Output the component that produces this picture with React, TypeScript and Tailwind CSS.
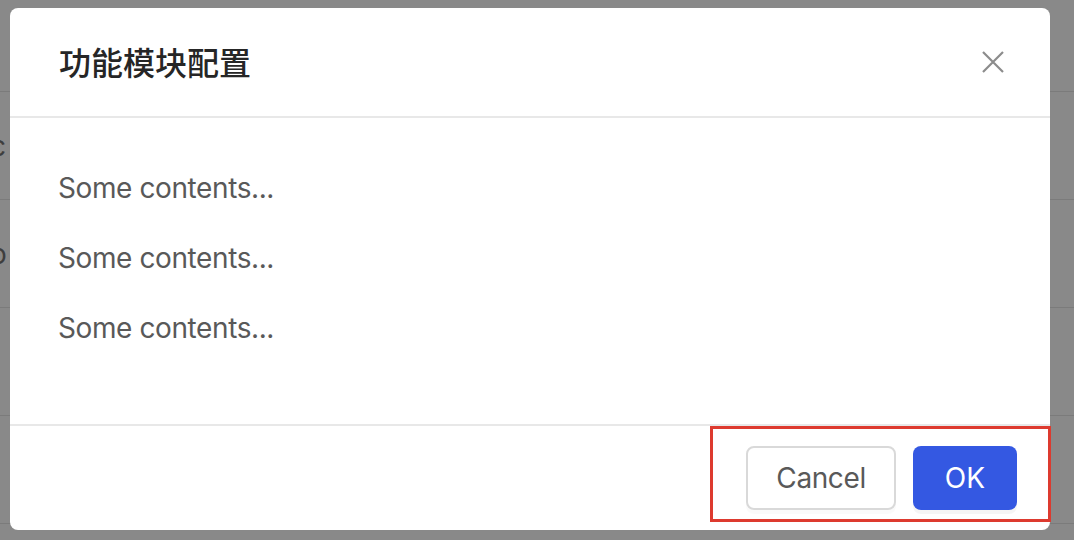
import React from "react";

const rows = [
  { h: "h-[92px]", text: "" },
  { h: "h-[108px]", text: "c" },
  { h: "h-[108px]", text: "o" },
  { h: "h-[108px]", text: "" },
  { h: "h-[108px]", text: "" },
];

// Close icon for the modal header
const CloseIcon = () => (
  <svg width="24" height="24" viewBox="0 0 24 24" fill="none">
    <path d="M2 2L22 22M22 2L2 22" stroke="#8c8c8c" strokeWidth="2.2" />
  </svg>
);

export default function App() {
  return (
    <div
      className="relative w-full h-[540px] overflow-hidden bg-[#898989]"
      style={{ fontFamily: "Inter, 'Noto Sans CJK SC', sans-serif" }}
    >
      {/* page behind the mask */}
      <div className="flex flex-col">
        {rows.map((r, i) => (
          <div
            key={i}
            className={`${r.h} border-b border-[#7b7b7b] flex items-center text-[28px] text-[#3e3e3e]`}
          >
            <span className="-ml-[10px]">{r.text}</span>
          </div>
        ))}
      </div>

      {/* modal */}
      <div className="absolute left-[10px] top-[8px] w-[1040px] h-[522px] rounded-lg bg-white flex flex-col">
        <div className="h-[110px] shrink-0 border-b-2 border-[#e8e8e8] flex items-center justify-between pl-[49px] pr-[45px]">
          <h1
            className="text-[32px] font-medium text-[#262626] -mt-[2px]"
            style={{ fontFamily: "'Noto Sans CJK SC', sans-serif" }}
          >
            功能模块配置
          </h1>
          <button className="w-[24px] h-[24px] flex items-center justify-center">
            <CloseIcon />
          </button>
        </div>

        <div className="flex-1 px-[48px] pt-[48px] text-[28px] tracking-[-0.4px] text-[#595959]">
          <p className="leading-[44px] mb-[26px]">Some contents...</p>
          <p className="leading-[44px] mb-[26px]">Some contents...</p>
          <p className="leading-[44px] mb-[26px]">Some contents...</p>
        </div>

        <div className="shrink-0 border-t-2 border-[#e8e8e8] py-[20px] px-[33px] flex justify-end gap-[17px]">
          <button className="h-[64px] px-[28px] rounded-lg border-2 border-[#d9d9d9] bg-white text-[28px] tracking-[-0.4px] text-[#595959] shadow-[0_4px_0_rgba(0,0,0,0.02)]">
            Cancel
          </button>
          <button className="h-[64px] px-[32px] rounded-lg bg-[#3458e2] text-[28px] text-white shadow-[0_4px_0_rgba(0,0,0,0.04)]">
            OK
          </button>
        </div>
      </div>

      {/* highlight annotation */}
      <div className="absolute left-[710px] top-[426px] w-[341px] h-[96px] border-[3px] border-[#dd3a2f] pointer-events-none" />
    </div>
  );
}
